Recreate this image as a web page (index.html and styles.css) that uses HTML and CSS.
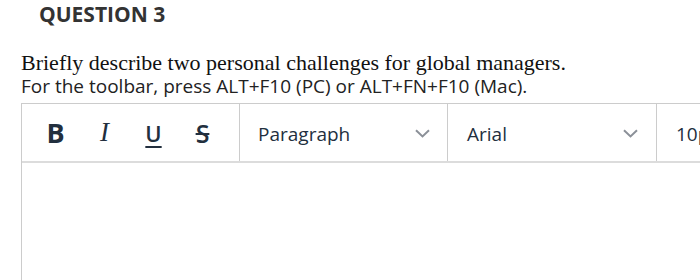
FILE: index.html
```html
<!DOCTYPE html>
<html lang="en">
<head>
  <meta charset="UTF-8">
  <title>Question 3</title>
  <link rel="stylesheet" href="styles.css">
</head>
<body>
  <h2 class="q-title">QUESTION 3</h2>
  <div class="q-body">
    <p class="q-text">Briefly describe two personal challenges for global managers.</p>
    <p class="q-hint">For the toolbar, press ALT+F10 (PC) or ALT+FN+F10 (Mac).</p>

    <div class="editor">
      <div class="toolbar">
        <div class="tb-group">
          <span class="tb-btn btn-bold">B</span>
          <span class="tb-btn btn-italic">I</span>
          <span class="tb-btn btn-under">U</span>
          <span class="tb-btn btn-strike">S</span>
        </div>
        <div class="tb-select sel-block">
          <span>Paragraph</span>
          <svg class="chev" width="15" height="9" viewBox="0 0 15 9"><path d="M1 1.2l6.5 6.2 6.5-6.2" fill="none" stroke="#8b9098" stroke-width="2"/></svg>
        </div>
        <div class="tb-select sel-font">
          <span>Arial</span>
          <svg class="chev" width="15" height="9" viewBox="0 0 15 9"><path d="M1 1.2l6.5 6.2 6.5-6.2" fill="none" stroke="#8b9098" stroke-width="2"/></svg>
        </div>
        <div class="tb-select sel-size">
          <span>10pt</span>
        </div>
      </div>
      <div class="edit-area"></div>
    </div>
  </div>
</body>
</html>
```

FILE: styles.css
```css
html {
  overflow: hidden;
}
body {
  margin: 0;
  background: #fff;
  font-family: 'Open Sans', sans-serif;
}
.q-title {
  margin: 0;
  padding-left: 39px;
  font-size: 21px;
  line-height: 28px;
  font-weight: 700;
  color: #333;
}
.q-body {
  padding-left: 21px;
  padding-top: 23px;
}
.q-text {
  margin: 0;
  font-family: 'Liberation Serif', 'Times New Roman', serif;
  font-size: 22px;
  line-height: 24px;
  color: #111;
}
.q-hint {
  margin: 0;
  font-size: 19px;
  line-height: 22px;
  color: #222;
}
.editor {
  margin-top: 6px;
  width: 760px;
  border: 1px solid #ccc;
}
.toolbar {
  display: flex;
  height: 57px;
  border-bottom: 2px solid #dcdcdc;
}
.tb-group {
  display: flex;
  align-items: center;
  width: 208px;
  padding-left: 9px;
  border-right: 1px solid #ccc;
}
.tb-btn {
  width: 49px;
  text-align: center;
  color: #222f3e;
}
.btn-bold {
  font-family: 'Open Sans', sans-serif;
  font-weight: 700;
  font-size: 27px;
}
.btn-italic {
  font-family: 'Liberation Serif', serif;
  font-style: italic;
  font-size: 27px;
}
.btn-under {
  font-size: 22px;
  font-weight: 600;
  text-decoration: underline;
  text-decoration-thickness: 2px;
  text-underline-offset: 4px;
}
.btn-strike {
  font-size: 25px;
  font-weight: 600;
  text-decoration: line-through;
  text-decoration-thickness: 2px;
}
.tb-select {
  display: flex;
  align-items: center;
  justify-content: space-between;
  font-size: 19px;
  color: #222f3e;
  border-right: 1px solid #ccc;
}
.sel-block {
  width: 172px;
  padding: 2px 17px 0 18px;
}
.sel-font {
  width: 171px;
  padding: 2px 18px 0 19px;
}
.sel-size {
  padding: 2px 19px 0 19px;
  border-right: none;
}
.edit-area {
  height: 200px;
}
```
